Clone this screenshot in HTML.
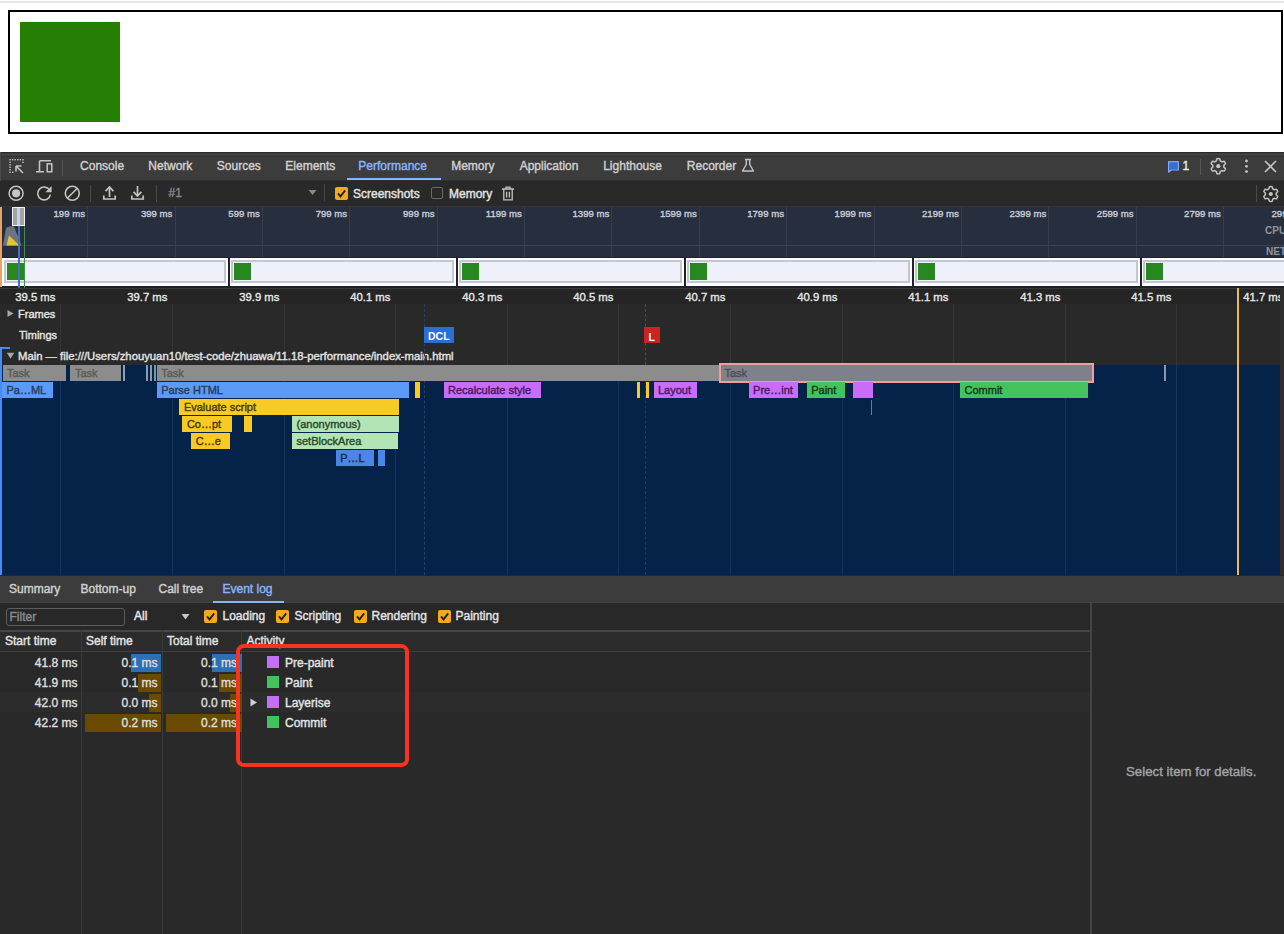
<!DOCTYPE html><html><head><meta charset="utf-8"><style>
html,body{margin:0;padding:0;width:1284px;height:934px;overflow:hidden;background:#262626}
body>div{position:absolute}
.t{position:absolute;white-space:pre;font-family:"Liberation Sans",sans-serif;-webkit-text-stroke:0.4px currentColor}
</style></head><body>
<div style="left:0px;top:0px;width:1284px;height:152px;background:#ffffff;"></div>
<div style="left:0px;top:1px;width:1284px;height:2px;background:#e6e6e6;"></div>
<div style="left:8px;top:10px;width:1275px;height:124px;background:transparent;border:2px solid #000;box-sizing:border-box"></div>
<div style="left:20px;top:22px;width:100px;height:100px;background:#237e03;"></div>
<div style="left:0px;top:152px;width:1284px;height:29px;background:#3c3c3c;"></div>
<div style="left:0px;top:152px;width:1284px;height:1px;background:#2a2a2a;"></div>
<div style="left:0px;top:154px;width:1284px;height:1px;background:#454545;"></div>
<div style="left:0px;top:156px;width:1284px;height:1px;background:#353535;"></div>
<div style="left:0px;top:180px;width:1284px;height:1px;background:#2f2f2f;"></div>
<div style="left:0px;top:152px;width:1px;height:29px;background:#4a4a4a;"></div>
<svg style="position:absolute;left:8px;top:158px;" width="17" height="17" viewBox="0 0 17 17"><g fill="#c4c4c4"><rect x="1.3" y="1" width="1.4" height="1.4"/><rect x="3.9" y="1" width="1.4" height="1.4"/><rect x="6.5" y="1" width="1.4" height="1.4"/><rect x="9.1" y="1" width="1.4" height="1.4"/><rect x="11.7" y="1" width="1.4" height="1.4"/><rect x="14.3" y="1" width="1.4" height="1.4"/><rect x="1.3" y="3.5" width="1.4" height="1.4"/><rect x="1.3" y="6.0" width="1.4" height="1.4"/><rect x="1.3" y="8.5" width="1.4" height="1.4"/><rect x="1.3" y="11.0" width="1.4" height="1.4"/><rect x="1.3" y="13.5" width="1.4" height="1.4"/><rect x="14.3" y="3.6" width="1.4" height="1.4"/><rect x="4" y="13.6" width="1.4" height="1.4"/></g><path d="M8.2 8.2 L15 15 M8 8 H13.5 M8 8 V13.5" stroke="#c4c4c4" stroke-width="1.6" fill="none"/></svg>
<svg style="position:absolute;left:35px;top:158px;" width="19" height="17" viewBox="0 0 19 17"><path d="M4.5 2.8 H16 M4.5 2.8 V13.6 M1 13.8 H9" stroke="#c4c4c4" stroke-width="1.6" fill="none"/><rect x="12.2" y="5.8" width="4.6" height="8" stroke="#c4c4c4" stroke-width="1.5" fill="none"/></svg>
<div style="left:62px;top:160px;width:1px;height:16px;background:#555;"></div>
<div class="t" style="left:80.1px;top:158px;font-size:12px;line-height:16px;color:#cfcfcf;font-weight:400;">Console</div>
<div class="t" style="left:148.3px;top:158px;font-size:12px;line-height:16px;color:#cfcfcf;font-weight:400;">Network</div>
<div class="t" style="left:216.8px;top:158px;font-size:12px;line-height:16px;color:#cfcfcf;font-weight:400;">Sources</div>
<div class="t" style="left:285.3px;top:158px;font-size:12px;line-height:16px;color:#cfcfcf;font-weight:400;">Elements</div>
<div class="t" style="left:358.3px;top:158px;font-size:12px;line-height:16px;color:#8ab4f8;font-weight:400;">Performance</div>
<div class="t" style="left:451.2px;top:158px;font-size:12px;line-height:16px;color:#cfcfcf;font-weight:400;">Memory</div>
<div class="t" style="left:519.7px;top:158px;font-size:12px;line-height:16px;color:#cfcfcf;font-weight:400;">Application</div>
<div class="t" style="left:603.2px;top:158px;font-size:12px;line-height:16px;color:#cfcfcf;font-weight:400;">Lighthouse</div>
<div class="t" style="left:686.8px;top:158px;font-size:12px;line-height:16px;color:#cfcfcf;font-weight:400;">Recorder</div>
<div style="left:347px;top:178px;width:94px;height:2px;background:#8ab4f8;"></div>
<svg style="position:absolute;left:740px;top:157px;" width="16" height="17" viewBox="0 0 16 17"><path d="M5 2.5 H11 M6.3 2.5 V7.5 L2.5 14 H13.5 L9.7 7.5 V2.5" stroke="#c4c4c4" stroke-width="1.4" fill="none" stroke-linejoin="round"/></svg>
<svg style="position:absolute;left:1167px;top:160px;" width="13" height="14" viewBox="0 0 13 14"><path d="M1.6 1.6 H11.4 V10 H4.2 L1.6 12.2 Z" fill="#3a6ad0" stroke="#7fa8f0" stroke-width="1.2" stroke-linejoin="round"/></svg>
<div class="t" style="left:1182.5px;top:158px;font-size:12px;line-height:16px;color:#e8e8e8;font-weight:400;">1</div>
<div style="left:1200px;top:159px;width:1px;height:16px;background:#555;"></div>
<svg style="position:absolute;left:1209px;top:157px;" width="19" height="19" viewBox="0 0 19 19"><path d="M9.30 1.60 L9.57 1.60 L9.83 1.62 L10.09 1.64 L10.36 1.67 L10.62 1.72 L10.81 2.08 L10.95 2.56 L11.06 3.06 L11.14 3.55 L11.22 3.92 L11.41 3.99 L11.59 4.06 L11.77 4.15 L11.94 4.23 L12.11 4.33 L12.28 4.43 L12.44 4.54 L12.61 4.65 L12.76 4.77 L12.92 4.89 L13.27 4.79 L13.74 4.61 L14.22 4.45 L14.71 4.33 L15.12 4.31 L15.29 4.52 L15.45 4.73 L15.60 4.95 L15.75 5.17 L15.88 5.40 L16.01 5.63 L16.13 5.87 L16.24 6.11 L16.35 6.35 L16.44 6.60 L16.23 6.95 L15.87 7.31 L15.50 7.66 L15.11 7.96 L14.84 8.22 L14.87 8.42 L14.89 8.61 L14.91 8.81 L14.92 9.00 L14.92 9.20 L14.92 9.40 L14.91 9.59 L14.89 9.79 L14.87 9.98 L14.84 10.18 L15.11 10.44 L15.50 10.74 L15.87 11.09 L16.23 11.45 L16.44 11.80 L16.35 12.05 L16.24 12.29 L16.13 12.53 L16.01 12.77 L15.88 13.00 L15.75 13.23 L15.60 13.45 L15.45 13.67 L15.29 13.88 L15.12 14.09 L14.71 14.07 L14.22 13.95 L13.74 13.79 L13.27 13.61 L12.92 13.51 L12.76 13.63 L12.61 13.75 L12.44 13.86 L12.28 13.97 L12.11 14.07 L11.94 14.17 L11.77 14.25 L11.59 14.34 L11.41 14.41 L11.22 14.48 L11.14 14.85 L11.06 15.34 L10.95 15.84 L10.81 16.32 L10.62 16.68 L10.36 16.73 L10.09 16.76 L9.83 16.78 L9.57 16.80 L9.30 16.80 L9.03 16.80 L8.77 16.78 L8.51 16.76 L8.24 16.73 L7.98 16.68 L7.79 16.32 L7.65 15.84 L7.54 15.34 L7.46 14.85 L7.38 14.48 L7.19 14.41 L7.01 14.34 L6.83 14.25 L6.66 14.17 L6.49 14.07 L6.32 13.97 L6.16 13.86 L5.99 13.75 L5.84 13.63 L5.68 13.51 L5.33 13.61 L4.86 13.79 L4.38 13.95 L3.89 14.07 L3.48 14.09 L3.31 13.88 L3.15 13.67 L3.00 13.45 L2.85 13.23 L2.72 13.00 L2.59 12.77 L2.47 12.53 L2.36 12.29 L2.25 12.05 L2.16 11.80 L2.37 11.45 L2.73 11.09 L3.10 10.74 L3.49 10.44 L3.76 10.18 L3.73 9.98 L3.71 9.79 L3.69 9.59 L3.68 9.40 L3.68 9.20 L3.68 9.00 L3.69 8.81 L3.71 8.61 L3.73 8.42 L3.76 8.22 L3.49 7.96 L3.10 7.66 L2.73 7.31 L2.37 6.95 L2.16 6.60 L2.25 6.35 L2.36 6.11 L2.47 5.87 L2.59 5.63 L2.72 5.40 L2.85 5.17 L3.00 4.95 L3.15 4.73 L3.31 4.52 L3.48 4.31 L3.89 4.33 L4.38 4.45 L4.86 4.61 L5.33 4.79 L5.68 4.89 L5.84 4.77 L5.99 4.65 L6.16 4.54 L6.32 4.43 L6.49 4.33 L6.66 4.23 L6.83 4.15 L7.01 4.06 L7.19 3.99 L7.38 3.92 L7.46 3.55 L7.54 3.06 L7.65 2.56 L7.79 2.08 L7.98 1.72 L8.24 1.67 L8.51 1.64 L8.77 1.62 L9.03 1.60Z" fill="none" stroke="#c4c4c4" stroke-width="1.5" stroke-linejoin="round"/><circle cx="9.3" cy="9.2" r="2.1" fill="#c4c4c4"/></svg>
<svg style="position:absolute;left:1243px;top:158px;" width="7" height="17" viewBox="0 0 7 17"><circle cx="3.5" cy="3" r="1.4" fill="#c4c4c4"/><circle cx="3.5" cy="8.3" r="1.4" fill="#c4c4c4"/><circle cx="3.5" cy="13.6" r="1.4" fill="#c4c4c4"/></svg>
<svg style="position:absolute;left:1263px;top:159px;" width="15" height="15" viewBox="0 0 15 15"><path d="M2 2 L13 13 M13 2 L2 13" stroke="#c4c4c4" stroke-width="1.6"/></svg>
<div style="left:0px;top:181px;width:1284px;height:26px;background:#292929;"></div>
<div style="left:0px;top:206px;width:1284px;height:1px;background:#343434;"></div>
<svg style="position:absolute;left:7px;top:185px;" width="19" height="17" viewBox="0 0 19 17"><circle cx="9.1" cy="8.3" r="7" stroke="#c4c4c4" stroke-width="1.5" fill="none"/><circle cx="9.1" cy="8.3" r="4.1" fill="#c4c4c4"/></svg>
<svg style="position:absolute;left:36px;top:185px;" width="17" height="17" viewBox="0 0 17 17"><path d="M13.6 5.2 A6.4 6.4 0 1 0 14.4 9.6" stroke="#c4c4c4" stroke-width="1.6" fill="none"/><path d="M15.6 1 V7.2 H9.4 Z" fill="#c4c4c4"/></svg>
<svg style="position:absolute;left:63px;top:185px;" width="18" height="17" viewBox="0 0 18 17"><circle cx="9.3" cy="8.3" r="7" stroke="#c4c4c4" stroke-width="1.6" fill="none"/><path d="M4.3 13.3 L14.3 3.3" stroke="#c4c4c4" stroke-width="1.6"/></svg>
<div style="left:90px;top:185px;width:1px;height:17px;background:#4a4a4a;"></div>
<svg style="position:absolute;left:102px;top:185px;" width="16" height="16" viewBox="0 0 16 16"><path d="M1.8 10.5 V14 H13.2 V10.5" stroke="#c4c4c4" stroke-width="1.7" fill="none"/><path d="M7.5 12 V3" stroke="#c4c4c4" stroke-width="1.7"/><path d="M3.6 6.2 L7.5 2 L11.4 6.2" stroke="#c4c4c4" stroke-width="1.7" fill="none"/></svg>
<svg style="position:absolute;left:130px;top:185px;" width="16" height="16" viewBox="0 0 16 16"><path d="M1.8 10.5 V14 H13.2 V10.5" stroke="#c4c4c4" stroke-width="1.7" fill="none"/><path d="M7.5 1 V10" stroke="#c4c4c4" stroke-width="1.7"/><path d="M3.6 6.8 L7.5 11 L11.4 6.8" stroke="#c4c4c4" stroke-width="1.7" fill="none"/></svg>
<div style="left:156px;top:185px;width:1px;height:17px;background:#4a4a4a;"></div>
<div class="t" style="left:168.5px;top:185px;font-size:12px;line-height:16px;color:#858585;font-weight:400;">#1</div>
<svg style="position:absolute;left:308px;top:189px;" width="9" height="7" viewBox="0 0 9 7"><path d="M0.5 1 H8.5 L4.5 6 Z" fill="#8a8a8a"/></svg>
<div style="left:324px;top:184px;width:1px;height:17px;background:#4a4a4a;"></div>
<svg style="position:absolute;left:335px;top:187px;" width="13" height="13" viewBox="0 0 13 13"><rect x="0" y="0" width="13" height="13" rx="2" fill="#f6a823"/><path d="M3 6.4 L5.5 9.4 L10.2 3.4" stroke="#2a2418" stroke-width="1.9" fill="none"/></svg>
<div class="t" style="left:353px;top:186px;font-size:12px;line-height:16px;color:#e3e3e3;font-weight:400;">Screenshots</div>
<div style="left:431px;top:187px;width:12px;height:12px;background:transparent;border:1px solid #6a6a6a;border-radius:2px;box-sizing:border-box"></div>
<div class="t" style="left:449px;top:186px;font-size:12px;line-height:16px;color:#e3e3e3;font-weight:400;">Memory</div>
<svg style="position:absolute;left:501px;top:186px;" width="14" height="15" viewBox="0 0 14 15"><path d="M1 3 H13 M5 3 V1.2 H9 V3 M2.8 3.5 V13.8 H11.2 V3.5 M5.6 5.8 V11.5 M8.4 5.8 V11.5" stroke="#c4c4c4" stroke-width="1.3" fill="none"/></svg>
<div style="left:1256px;top:185px;width:1px;height:17px;background:#4a4a4a;"></div>
<svg style="position:absolute;left:1262px;top:185px;" width="18" height="18" viewBox="0 0 18 18"><path d="M8.80 1.60 L9.06 1.60 L9.32 1.62 L9.57 1.64 L9.83 1.67 L10.08 1.71 L10.27 2.06 L10.41 2.54 L10.51 3.02 L10.59 3.50 L10.67 3.85 L10.85 3.92 L11.03 4.00 L11.20 4.08 L11.37 4.16 L11.54 4.26 L11.70 4.36 L11.86 4.46 L12.02 4.57 L12.17 4.68 L12.32 4.81 L12.67 4.70 L13.12 4.53 L13.59 4.37 L14.07 4.25 L14.47 4.24 L14.63 4.44 L14.79 4.65 L14.93 4.86 L15.08 5.08 L15.21 5.30 L15.33 5.53 L15.45 5.76 L15.56 5.99 L15.66 6.23 L15.75 6.47 L15.54 6.81 L15.20 7.16 L14.83 7.50 L14.46 7.80 L14.19 8.05 L14.22 8.24 L14.25 8.43 L14.26 8.62 L14.27 8.81 L14.28 9.00 L14.27 9.19 L14.26 9.38 L14.25 9.57 L14.22 9.76 L14.19 9.95 L14.46 10.20 L14.83 10.50 L15.20 10.84 L15.54 11.19 L15.75 11.53 L15.66 11.77 L15.56 12.01 L15.45 12.24 L15.33 12.47 L15.21 12.70 L15.08 12.92 L14.93 13.14 L14.79 13.35 L14.63 13.56 L14.47 13.76 L14.07 13.75 L13.59 13.63 L13.12 13.47 L12.67 13.30 L12.32 13.19 L12.17 13.32 L12.02 13.43 L11.86 13.54 L11.70 13.64 L11.54 13.74 L11.37 13.84 L11.20 13.92 L11.03 14.00 L10.85 14.08 L10.67 14.15 L10.59 14.50 L10.51 14.98 L10.41 15.46 L10.27 15.94 L10.08 16.29 L9.83 16.33 L9.57 16.36 L9.32 16.38 L9.06 16.40 L8.80 16.40 L8.54 16.40 L8.28 16.38 L8.03 16.36 L7.77 16.33 L7.52 16.29 L7.33 15.94 L7.19 15.46 L7.09 14.98 L7.01 14.50 L6.93 14.15 L6.75 14.08 L6.57 14.00 L6.40 13.92 L6.23 13.84 L6.06 13.74 L5.90 13.64 L5.74 13.54 L5.58 13.43 L5.43 13.32 L5.28 13.19 L4.93 13.30 L4.48 13.47 L4.01 13.63 L3.53 13.75 L3.13 13.76 L2.97 13.56 L2.81 13.35 L2.67 13.14 L2.52 12.92 L2.39 12.70 L2.27 12.47 L2.15 12.24 L2.04 12.01 L1.94 11.77 L1.85 11.53 L2.06 11.19 L2.40 10.84 L2.77 10.50 L3.14 10.20 L3.41 9.95 L3.38 9.76 L3.35 9.57 L3.34 9.38 L3.33 9.19 L3.32 9.00 L3.33 8.81 L3.34 8.62 L3.35 8.43 L3.38 8.24 L3.41 8.05 L3.14 7.80 L2.77 7.50 L2.40 7.16 L2.06 6.81 L1.85 6.47 L1.94 6.23 L2.04 5.99 L2.15 5.76 L2.27 5.53 L2.39 5.30 L2.52 5.08 L2.67 4.86 L2.81 4.65 L2.97 4.44 L3.13 4.24 L3.53 4.25 L4.01 4.37 L4.48 4.53 L4.93 4.70 L5.28 4.81 L5.43 4.68 L5.58 4.57 L5.74 4.46 L5.90 4.36 L6.06 4.26 L6.23 4.16 L6.40 4.08 L6.57 4.00 L6.75 3.92 L6.93 3.85 L7.01 3.50 L7.09 3.02 L7.19 2.54 L7.33 2.06 L7.52 1.71 L7.77 1.67 L8.03 1.64 L8.28 1.62 L8.54 1.60Z" fill="none" stroke="#c4c4c4" stroke-width="1.5" stroke-linejoin="round"/><circle cx="8.8" cy="9.0" r="2.1" fill="#c4c4c4"/></svg>
<div style="left:0px;top:207px;width:1284px;height:50px;background:#272e3e;"></div>
<div style="left:0px;top:245px;width:1284px;height:1px;background:#3a4150;"></div>
<div style="left:87px;top:207px;width:1px;height:50px;background:#363d4c;"></div>
<div class="t" style="right:1199.0px;top:208px;font-size:9.6px;line-height:12px;color:#c5c9d2;font-weight:400;text-align:right;">199 ms</div>
<div style="left:175px;top:207px;width:1px;height:50px;background:#363d4c;"></div>
<div class="t" style="right:1111.6px;top:208px;font-size:9.6px;line-height:12px;color:#c5c9d2;font-weight:400;text-align:right;">399 ms</div>
<div style="left:262px;top:207px;width:1px;height:50px;background:#363d4c;"></div>
<div class="t" style="right:1024.2px;top:208px;font-size:9.6px;line-height:12px;color:#c5c9d2;font-weight:400;text-align:right;">599 ms</div>
<div style="left:349px;top:207px;width:1px;height:50px;background:#363d4c;"></div>
<div class="t" style="right:936.9px;top:208px;font-size:9.6px;line-height:12px;color:#c5c9d2;font-weight:400;text-align:right;">799 ms</div>
<div style="left:437px;top:207px;width:1px;height:50px;background:#363d4c;"></div>
<div class="t" style="right:849.5px;top:208px;font-size:9.6px;line-height:12px;color:#c5c9d2;font-weight:400;text-align:right;">999 ms</div>
<div style="left:524px;top:207px;width:1px;height:50px;background:#363d4c;"></div>
<div class="t" style="right:762.1px;top:208px;font-size:9.6px;line-height:12px;color:#c5c9d2;font-weight:400;text-align:right;">1199 ms</div>
<div style="left:611px;top:207px;width:1px;height:50px;background:#363d4c;"></div>
<div class="t" style="right:674.7px;top:208px;font-size:9.6px;line-height:12px;color:#c5c9d2;font-weight:400;text-align:right;">1399 ms</div>
<div style="left:699px;top:207px;width:1px;height:50px;background:#363d4c;"></div>
<div class="t" style="right:587.3px;top:208px;font-size:9.6px;line-height:12px;color:#c5c9d2;font-weight:400;text-align:right;">1599 ms</div>
<div style="left:786px;top:207px;width:1px;height:50px;background:#363d4c;"></div>
<div class="t" style="right:500.0px;top:208px;font-size:9.6px;line-height:12px;color:#c5c9d2;font-weight:400;text-align:right;">1799 ms</div>
<div style="left:874px;top:207px;width:1px;height:50px;background:#363d4c;"></div>
<div class="t" style="right:412.6px;top:208px;font-size:9.6px;line-height:12px;color:#c5c9d2;font-weight:400;text-align:right;">1999 ms</div>
<div style="left:961px;top:207px;width:1px;height:50px;background:#363d4c;"></div>
<div class="t" style="right:325.20000000000005px;top:208px;font-size:9.6px;line-height:12px;color:#c5c9d2;font-weight:400;text-align:right;">2199 ms</div>
<div style="left:1048px;top:207px;width:1px;height:50px;background:#363d4c;"></div>
<div class="t" style="right:237.79999999999995px;top:208px;font-size:9.6px;line-height:12px;color:#c5c9d2;font-weight:400;text-align:right;">2399 ms</div>
<div style="left:1136px;top:207px;width:1px;height:50px;background:#363d4c;"></div>
<div class="t" style="right:150.4000000000001px;top:208px;font-size:9.6px;line-height:12px;color:#c5c9d2;font-weight:400;text-align:right;">2599 ms</div>
<div style="left:1223px;top:207px;width:1px;height:50px;background:#363d4c;"></div>
<div class="t" style="right:63.09999999999991px;top:208px;font-size:9.6px;line-height:12px;color:#c5c9d2;font-weight:400;text-align:right;">2799 ms</div>
<div style="left:1311px;top:207px;width:1px;height:50px;background:#363d4c;"></div>
<div class="t" style="right:-24.299999999999955px;top:208px;font-size:9.6px;line-height:12px;color:#c5c9d2;font-weight:400;text-align:right;">2999 ms</div>
<div class="t" style="left:1265px;top:225px;font-size:10px;line-height:12px;color:#8f959e;font-weight:700;-webkit-text-stroke:0">CPU</div>
<div class="t" style="left:1266px;top:246px;font-size:10px;line-height:12px;color:#8f959e;font-weight:700;-webkit-text-stroke:0">NET</div>
<svg style="position:absolute;left:2px;top:225px;" width="22" height="22" viewBox="0 0 22 22"><path d="M1 20.5 L4 3 Q5 1.5 8 1.5 H12 L19.5 20.5 Z" fill="#6f7580"/><path d="M4.5 20.5 L7 10.5 L17.5 20.5 Z" fill="#e6c52a"/></svg>
<div style="left:12px;top:207px;width:13px;height:19px;background:#a3a3a3;border:1px solid #f2f2f2;box-sizing:border-box"></div>
<div style="left:17px;top:208px;width:3px;height:17px;background:#c0d0ee;"></div>
<div style="left:0px;top:257px;width:1284px;height:31px;background:#1e2230;"></div>
<div style="left:2px;top:258px;width:225.5px;height:28px;background:#ffffff;"></div>
<div style="left:3.5px;top:260px;width:222.5px;height:23px;background:#eef0fa;border:2px solid #c4c7d2;box-sizing:border-box"></div>
<div style="left:6.5px;top:263px;width:17px;height:17px;background:#27881f;"></div>
<div style="left:229.5px;top:258px;width:226.0px;height:28px;background:#ffffff;"></div>
<div style="left:231.0px;top:260px;width:223.0px;height:23px;background:#eef0fa;border:2px solid #c4c7d2;box-sizing:border-box"></div>
<div style="left:234.0px;top:263px;width:17px;height:17px;background:#27881f;"></div>
<div style="left:457.5px;top:258px;width:226.0px;height:28px;background:#ffffff;"></div>
<div style="left:459.0px;top:260px;width:223.0px;height:23px;background:#eef0fa;border:2px solid #c4c7d2;box-sizing:border-box"></div>
<div style="left:462.0px;top:263px;width:17px;height:17px;background:#27881f;"></div>
<div style="left:685.5px;top:258px;width:226.20000000000005px;height:28px;background:#ffffff;"></div>
<div style="left:687.0px;top:260px;width:223.20000000000005px;height:23px;background:#eef0fa;border:2px solid #c4c7d2;box-sizing:border-box"></div>
<div style="left:690.0px;top:263px;width:17px;height:17px;background:#27881f;"></div>
<div style="left:913.7px;top:258px;width:226.20000000000005px;height:28px;background:#ffffff;"></div>
<div style="left:915.2px;top:260px;width:223.20000000000005px;height:23px;background:#eef0fa;border:2px solid #c4c7d2;box-sizing:border-box"></div>
<div style="left:918.2px;top:263px;width:17px;height:17px;background:#27881f;"></div>
<div style="left:1141.9px;top:258px;width:148.0999999999999px;height:28px;background:#ffffff;"></div>
<div style="left:1143.4px;top:260px;width:145.0999999999999px;height:23px;background:#eef0fa;border:2px solid #c4c7d2;box-sizing:border-box"></div>
<div style="left:1146.4px;top:263px;width:17px;height:17px;background:#27881f;"></div>
<div style="left:18px;top:226px;width:1.5px;height:62px;background:#4670b8;"></div>
<div style="left:0px;top:207px;width:1.8px;height:80px;background:#e8a462;"></div>
<div style="left:24px;top:226px;width:1px;height:62px;background:#3f8f55;"></div>
<div style="left:0px;top:288px;width:1284px;height:77px;background:#292929;"></div>
<div style="left:0px;top:288px;width:1284px;height:16px;background:#252525;"></div>
<div style="left:0px;top:288px;width:1284px;height:1px;background:#383838;"></div>
<div style="left:60px;top:304px;width:1px;height:271px;background:#353535;"></div>
<div class="t" style="right:1228.6px;top:288.7px;font-size:11.3px;line-height:16px;color:#e8e8e8;font-weight:400;text-align:right;-webkit-text-stroke:0.35px currentColor">39.5 ms</div>
<div style="left:172px;top:304px;width:1px;height:271px;background:#353535;"></div>
<div class="t" style="right:1116.6px;top:288.7px;font-size:11.3px;line-height:16px;color:#e8e8e8;font-weight:400;text-align:right;-webkit-text-stroke:0.35px currentColor">39.7 ms</div>
<div style="left:284px;top:304px;width:1px;height:271px;background:#353535;"></div>
<div class="t" style="right:1004.6px;top:288.7px;font-size:11.3px;line-height:16px;color:#e8e8e8;font-weight:400;text-align:right;-webkit-text-stroke:0.35px currentColor">39.9 ms</div>
<div style="left:395px;top:304px;width:1px;height:271px;background:#353535;"></div>
<div class="t" style="right:893.6px;top:288.7px;font-size:11.3px;line-height:16px;color:#e8e8e8;font-weight:400;text-align:right;-webkit-text-stroke:0.35px currentColor">40.1 ms</div>
<div style="left:507px;top:304px;width:1px;height:271px;background:#353535;"></div>
<div class="t" style="right:781.6px;top:288.7px;font-size:11.3px;line-height:16px;color:#e8e8e8;font-weight:400;text-align:right;-webkit-text-stroke:0.35px currentColor">40.3 ms</div>
<div style="left:618px;top:304px;width:1px;height:271px;background:#353535;"></div>
<div class="t" style="right:670.6px;top:288.7px;font-size:11.3px;line-height:16px;color:#e8e8e8;font-weight:400;text-align:right;-webkit-text-stroke:0.35px currentColor">40.5 ms</div>
<div style="left:730px;top:304px;width:1px;height:271px;background:#353535;"></div>
<div class="t" style="right:558.6px;top:288.7px;font-size:11.3px;line-height:16px;color:#e8e8e8;font-weight:400;text-align:right;-webkit-text-stroke:0.35px currentColor">40.7 ms</div>
<div style="left:842px;top:304px;width:1px;height:271px;background:#353535;"></div>
<div class="t" style="right:446.6px;top:288.7px;font-size:11.3px;line-height:16px;color:#e8e8e8;font-weight:400;text-align:right;-webkit-text-stroke:0.35px currentColor">40.9 ms</div>
<div style="left:953px;top:304px;width:1px;height:271px;background:#353535;"></div>
<div class="t" style="right:335.6px;top:288.7px;font-size:11.3px;line-height:16px;color:#e8e8e8;font-weight:400;text-align:right;-webkit-text-stroke:0.35px currentColor">41.1 ms</div>
<div style="left:1065px;top:304px;width:1px;height:271px;background:#353535;"></div>
<div class="t" style="right:223.5999999999999px;top:288.7px;font-size:11.3px;line-height:16px;color:#e8e8e8;font-weight:400;text-align:right;-webkit-text-stroke:0.35px currentColor">41.3 ms</div>
<div style="left:1176px;top:304px;width:1px;height:271px;background:#353535;"></div>
<div class="t" style="right:112.59999999999991px;top:288.7px;font-size:11.3px;line-height:16px;color:#e8e8e8;font-weight:400;text-align:right;-webkit-text-stroke:0.35px currentColor">41.5 ms</div>
<div style="left:1288px;top:304px;width:1px;height:271px;background:#353535;"></div>
<div class="t" style="right:0.599999999999909px;top:288.7px;font-size:11.3px;line-height:16px;color:#e8e8e8;font-weight:400;text-align:right;-webkit-text-stroke:0.35px currentColor">41.7 ms</div>
<svg style="position:absolute;left:6px;top:308px;" width="9" height="11" viewBox="0 0 9 11"><path d="M1.5 2 L7.5 5.5 L1.5 9 Z" fill="#a8a8a8"/></svg>
<div class="t" style="left:18px;top:306px;font-size:11px;line-height:16px;color:#e3e3e3;font-weight:400;">Frames</div>
<div class="t" style="left:19px;top:326.5px;font-size:11px;line-height:16px;color:#e3e3e3;font-weight:400;">Timings</div>
<svg style="position:absolute;left:5px;top:351px;" width="11" height="9" viewBox="0 0 11 9"><path d="M1.8 1.8 H9.2 L5.5 7.8 Z" fill="#a8a8a8"/></svg>
<div class="t" style="left:18px;top:348px;font-size:11.3px;line-height:16px;color:#e3e3e3;font-weight:400;">Main — file:///Users/zhouyuan10/test-code/zhuawa/11.18-performance/index-main.html</div>
<div style="left:0px;top:347px;width:10px;height:2px;background:#4a8af4;"></div>
<div style="left:0px;top:347px;width:2px;height:228px;background:#4a8af4;"></div>
<div style="left:424px;top:304px;width:1px;height:271px;background:transparent;border-left:1px dashed #23406e"></div>
<div style="left:645px;top:304px;width:1px;height:61px;background:transparent;border-left:1px dashed #8a3030"></div>
<div style="left:424px;top:327px;width:30px;height:16px;background:#2a6fd6;"></div>
<div class="t" style="left:428px;top:328px;font-size:10.5px;line-height:16px;color:#ffffff;font-weight:700;-webkit-text-stroke:0">DCL</div>
<div style="left:644px;top:327px;width:16px;height:16px;background:#cc2222;"></div>
<div class="t" style="left:648.5px;top:328.5px;font-size:10.5px;line-height:16px;color:#ffffff;font-weight:700;-webkit-text-stroke:0">L</div>
<div style="left:2px;top:365px;width:1278px;height:210px;background:#052249;"></div>
<div style="left:60px;top:365px;width:1px;height:210px;background:#163258;"></div>
<div style="left:172px;top:365px;width:1px;height:210px;background:#163258;"></div>
<div style="left:284px;top:365px;width:1px;height:210px;background:#163258;"></div>
<div style="left:395px;top:365px;width:1px;height:210px;background:#163258;"></div>
<div style="left:507px;top:365px;width:1px;height:210px;background:#163258;"></div>
<div style="left:618px;top:365px;width:1px;height:210px;background:#163258;"></div>
<div style="left:730px;top:365px;width:1px;height:210px;background:#163258;"></div>
<div style="left:842px;top:365px;width:1px;height:210px;background:#163258;"></div>
<div style="left:953px;top:365px;width:1px;height:210px;background:#163258;"></div>
<div style="left:1065px;top:365px;width:1px;height:210px;background:#163258;"></div>
<div style="left:1176px;top:365px;width:1px;height:210px;background:#163258;"></div>
<div style="left:424px;top:365px;width:1px;height:210px;background:transparent;border-left:1px dashed #23406e"></div>
<div style="left:645px;top:365px;width:1px;height:210px;background:transparent;border-left:1px dashed #552844"></div>
<div style="left:2.5px;top:365px;width:63.9px;height:16px;background:#8c8c8c;"></div>
<div class="t" style="left:7.0px;top:365px;font-size:11px;line-height:16px;color:#5a5a5a;font-weight:400;">Task</div>
<div style="left:70.4px;top:365px;width:51.0px;height:16px;background:#8c8c8c;"></div>
<div class="t" style="left:74.9px;top:365px;font-size:11px;line-height:16px;color:#5a5a5a;font-weight:400;">Task</div>
<div style="left:123px;top:365px;width:2px;height:16px;background:#8aa0b8;"></div>
<div style="left:146px;top:365px;width:2px;height:16px;background:#8a9ab0;"></div>
<div style="left:150px;top:365px;width:2px;height:16px;background:#8a9ab0;"></div>
<div style="left:154px;top:365px;width:2px;height:16px;background:#7a9a90;"></div>
<div style="left:156.7px;top:365px;width:562.0px;height:16px;background:#8c8c8c;"></div>
<div class="t" style="left:161.2px;top:365px;font-size:11px;line-height:16px;color:#5a5a5a;font-weight:400;">Task</div>
<div style="left:718.7px;top:363px;width:375px;height:20px;background:#7e818c;border:2px solid #f0a09a;box-sizing:border-box"></div>
<div class="t" style="left:724.5px;top:365px;font-size:11px;line-height:16px;color:#4a4e5a;font-weight:400;">Task</div>
<div style="left:1164px;top:365px;width:2px;height:16px;background:#8a98b0;"></div>
<div style="left:2px;top:382px;width:51px;height:16px;background:#5b9af6;"></div>
<div class="t" style="left:6.5px;top:382px;font-size:11px;line-height:16px;color:#2a3a5a;font-weight:400;">Pa…ML</div>
<div style="left:156.7px;top:382px;width:252.0px;height:16px;background:#5b9af6;"></div>
<div class="t" style="left:161.2px;top:382px;font-size:11px;line-height:16px;color:#2a3a5a;font-weight:400;">Parse HTML</div>
<div style="left:415px;top:382px;width:4.5px;height:16px;background:#f8ca26;"></div>
<div style="left:443.5px;top:382px;width:97.5px;height:16px;background:#c96cf8;"></div>
<div class="t" style="left:448.0px;top:382px;font-size:11px;line-height:16px;color:#4a1a62;font-weight:400;">Recalculate style</div>
<div style="left:637px;top:382px;width:3px;height:16px;background:#f8ca26;"></div>
<div style="left:645.5px;top:382px;width:3.5px;height:16px;background:#f8ca26;"></div>
<div style="left:653.5px;top:382px;width:43.5px;height:16px;background:#c96cf8;"></div>
<div class="t" style="left:658.0px;top:382px;font-size:11px;line-height:16px;color:#4a1a62;font-weight:400;">Layout</div>
<div style="left:748.6px;top:382px;width:49.4px;height:16px;background:#c96cf8;"></div>
<div class="t" style="left:753.1px;top:382px;font-size:11px;line-height:16px;color:#4a1a62;font-weight:400;">Pre…int</div>
<div style="left:806.7px;top:382px;width:38.6px;height:16px;background:#43c25e;"></div>
<div class="t" style="left:811.2px;top:382px;font-size:11px;line-height:16px;color:#123a1a;font-weight:400;">Paint</div>
<div style="left:852.5px;top:382px;width:20.7px;height:16px;background:#c96cf8;"></div>
<div style="left:960px;top:382px;width:128px;height:16px;background:#43c25e;"></div>
<div class="t" style="left:964.5px;top:382px;font-size:11px;line-height:16px;color:#123a1a;font-weight:400;">Commit</div>
<div style="left:179.4px;top:399px;width:219.9px;height:16px;background:#f8ca26;"></div>
<div class="t" style="left:183.9px;top:399px;font-size:11px;line-height:16px;color:#4a3a08;font-weight:400;">Evaluate script</div>
<div style="left:871px;top:400px;width:1px;height:15px;background:#3a9a78;"></div>
<div style="left:182.4px;top:416px;width:49.4px;height:16px;background:#f8ca26;"></div>
<div class="t" style="left:186.9px;top:416px;font-size:11px;line-height:16px;color:#4a3a08;font-weight:400;">Co…pt</div>
<div style="left:243.5px;top:416px;width:8.7px;height:16px;background:#f8ca26;"></div>
<div style="left:292px;top:416px;width:106.8px;height:16px;background:#b3e4b6;"></div>
<div class="t" style="left:296.5px;top:416px;font-size:11px;line-height:16px;color:#2a4a2a;font-weight:400;">(anonymous)</div>
<div style="left:191.2px;top:433px;width:39.1px;height:16px;background:#f8ca26;"></div>
<div class="t" style="left:195.7px;top:433px;font-size:11px;line-height:16px;color:#4a3a08;font-weight:400;">C…e</div>
<div style="left:292px;top:433px;width:106px;height:16px;background:#b3e4b6;"></div>
<div class="t" style="left:296.5px;top:433px;font-size:11px;line-height:16px;color:#2a4a2a;font-weight:400;">setBlockArea</div>
<div style="left:335.7px;top:450px;width:38.1px;height:16px;background:#4a86e8;"></div>
<div class="t" style="left:340.2px;top:450px;font-size:11px;line-height:16px;color:#1b2a44;font-weight:400;">P…L</div>
<div style="left:378px;top:450px;width:7px;height:16px;background:#4a86e8;"></div>
<div style="left:1237px;top:288px;width:2px;height:287px;background:#f2b84b;"></div>
<div style="left:1280px;top:288px;width:4px;height:287px;background:#2e2e2e;"></div>
<div style="left:0px;top:575.5px;width:1284px;height:27.5px;background:#3c3c3c;"></div>
<div style="left:0px;top:602px;width:1284px;height:1px;background:#444444;"></div>
<div class="t" style="left:9px;top:581px;font-size:12px;line-height:16px;color:#d0d0d0;font-weight:400;">Summary</div>
<div class="t" style="left:80.5px;top:581px;font-size:12px;line-height:16px;color:#d0d0d0;font-weight:400;">Bottom-up</div>
<div class="t" style="left:158.5px;top:581px;font-size:12px;line-height:16px;color:#d0d0d0;font-weight:400;">Call tree</div>
<div class="t" style="left:222.5px;top:581px;font-size:12px;line-height:16px;color:#8ab4f8;font-weight:400;">Event log</div>
<div style="left:213px;top:601px;width:71px;height:2px;background:#8ab4f8;"></div>
<div style="left:0px;top:603px;width:1284px;height:27px;background:#282828;"></div>
<div style="left:5.5px;top:608px;width:119px;height:18px;background:transparent;border:1px solid #5c5c5c;border-radius:3px;box-sizing:border-box"></div>
<div class="t" style="left:9.5px;top:609px;font-size:12px;line-height:16px;color:#8a8a8a;font-weight:400;">Filter</div>
<div class="t" style="left:134px;top:608px;font-size:12px;line-height:16px;color:#e8e8e8;font-weight:400;">All</div>
<svg style="position:absolute;left:181px;top:613px;" width="9" height="8" viewBox="0 0 9 8"><path d="M0.5 1 H8.5 L4.5 6.5 Z" fill="#c8c8c8"/></svg>
<svg style="position:absolute;left:204px;top:610px;" width="13" height="13" viewBox="0 0 13 13"><rect x="0" y="0" width="13" height="13" rx="2" fill="#f6a823"/><path d="M3 6.4 L5.5 9.4 L10.2 3.4" stroke="#2a2418" stroke-width="1.9" fill="none"/></svg>
<div class="t" style="left:222.5px;top:608px;font-size:12px;line-height:16px;color:#e3e3e3;font-weight:400;">Loading</div>
<svg style="position:absolute;left:276px;top:610px;" width="13" height="13" viewBox="0 0 13 13"><rect x="0" y="0" width="13" height="13" rx="2" fill="#f6a823"/><path d="M3 6.4 L5.5 9.4 L10.2 3.4" stroke="#2a2418" stroke-width="1.9" fill="none"/></svg>
<div class="t" style="left:294.5px;top:608px;font-size:12px;line-height:16px;color:#e3e3e3;font-weight:400;">Scripting</div>
<svg style="position:absolute;left:353.5px;top:610px;" width="13" height="13" viewBox="0 0 13 13"><rect x="0" y="0" width="13" height="13" rx="2" fill="#f6a823"/><path d="M3 6.4 L5.5 9.4 L10.2 3.4" stroke="#2a2418" stroke-width="1.9" fill="none"/></svg>
<div class="t" style="left:371.5px;top:608px;font-size:12px;line-height:16px;color:#e3e3e3;font-weight:400;">Rendering</div>
<svg style="position:absolute;left:437.5px;top:610px;" width="13" height="13" viewBox="0 0 13 13"><rect x="0" y="0" width="13" height="13" rx="2" fill="#f6a823"/><path d="M3 6.4 L5.5 9.4 L10.2 3.4" stroke="#2a2418" stroke-width="1.9" fill="none"/></svg>
<div class="t" style="left:455.5px;top:608px;font-size:12px;line-height:16px;color:#e3e3e3;font-weight:400;">Painting</div>
<div style="left:0px;top:630px;width:1090px;height:304px;background:#292929;"></div>
<div style="left:0px;top:631px;width:1090px;height:21px;background:#2c2c2c;"></div>
<div style="left:0px;top:630px;width:1090px;height:1.5px;background:#464646;"></div>
<div style="left:0px;top:651px;width:1090px;height:1px;background:#3e3e3e;"></div>
<div style="left:1090px;top:603px;width:2px;height:331px;background:#444444;"></div>
<div style="left:1092px;top:603px;width:192px;height:331px;background:#292929;"></div>
<div class="t" style="left:1126px;top:764px;font-size:13.25px;line-height:16px;color:#a0a3a8;font-weight:400;">Select item for details.</div>
<div class="t" style="left:5px;top:633px;font-size:12px;line-height:16px;color:#e3e3e3;font-weight:400;">Start time</div>
<div class="t" style="left:86px;top:633px;font-size:12px;line-height:16px;color:#e3e3e3;font-weight:400;">Self time</div>
<div class="t" style="left:167px;top:633px;font-size:12px;line-height:16px;color:#e3e3e3;font-weight:400;">Total time</div>
<div class="t" style="left:246.5px;top:633px;font-size:12px;line-height:16px;color:#e3e3e3;font-weight:400;">Activity</div>
<div style="left:0px;top:692px;width:1090px;height:20px;background:#2c2c2c;"></div>
<div style="left:81px;top:630px;width:1px;height:304px;background:#3a3a3a;"></div>
<div style="left:162px;top:630px;width:1px;height:304px;background:#3a3a3a;"></div>
<div style="left:241px;top:630px;width:1px;height:304px;background:#3a3a3a;"></div>
<div style="left:131px;top:654px;width:30px;height:18px;background:#2d6fb4;"></div>
<div style="left:212px;top:654px;width:30px;height:18px;background:#2d6fb4;"></div>
<div class="t" style="right:1206.5px;top:655px;font-size:12px;line-height:16px;color:#dcdcdc;font-weight:400;text-align:right;">41.8 ms</div>
<div class="t" style="right:1126.5px;top:655px;font-size:12px;line-height:16px;color:#dcdcdc;font-weight:400;text-align:right;">0.1 ms</div>
<div class="t" style="right:1047px;top:655px;font-size:12px;line-height:16px;color:#dcdcdc;font-weight:400;text-align:right;">0.1 ms</div>
<div style="left:267px;top:656px;width:12px;height:12px;background:#c46ff7;"></div>
<div class="t" style="left:285px;top:655px;font-size:12px;line-height:16px;color:#e3e3e3;font-weight:400;">Pre-paint</div>
<div style="left:137.5px;top:674px;width:23.5px;height:18px;background:#6a4a00;"></div>
<div style="left:218.5px;top:674px;width:23.5px;height:18px;background:#6a4a00;"></div>
<div class="t" style="right:1206.5px;top:675px;font-size:12px;line-height:16px;color:#dcdcdc;font-weight:400;text-align:right;">41.9 ms</div>
<div class="t" style="right:1126.5px;top:675px;font-size:12px;line-height:16px;color:#dcdcdc;font-weight:400;text-align:right;">0.1 ms</div>
<div class="t" style="right:1047px;top:675px;font-size:12px;line-height:16px;color:#dcdcdc;font-weight:400;text-align:right;">0.1 ms</div>
<div style="left:267px;top:676px;width:12px;height:12px;background:#43c25e;"></div>
<div class="t" style="left:285px;top:675px;font-size:12px;line-height:16px;color:#e3e3e3;font-weight:400;">Paint</div>
<div style="left:149px;top:694px;width:12px;height:18px;background:#6a4a00;"></div>
<div style="left:230px;top:694px;width:12px;height:18px;background:#6a4a00;"></div>
<div class="t" style="right:1206.5px;top:695px;font-size:12px;line-height:16px;color:#dcdcdc;font-weight:400;text-align:right;">42.0 ms</div>
<div class="t" style="right:1126.5px;top:695px;font-size:12px;line-height:16px;color:#dcdcdc;font-weight:400;text-align:right;">0.0 ms</div>
<div class="t" style="right:1047px;top:695px;font-size:12px;line-height:16px;color:#dcdcdc;font-weight:400;text-align:right;">0.0 ms</div>
<div style="left:267px;top:696px;width:12px;height:12px;background:#c46ff7;"></div>
<div class="t" style="left:285px;top:695px;font-size:12px;line-height:16px;color:#e3e3e3;font-weight:400;">Layerise</div>
<svg style="position:absolute;left:250px;top:698px;" width="8" height="9" viewBox="0 0 8 9"><path d="M0.5 0.5 L7 4.5 L0.5 8.5 Z" fill="#d0d0d0"/></svg>
<div style="left:85px;top:714px;width:76px;height:18px;background:#6a4a00;"></div>
<div style="left:166px;top:714px;width:76px;height:18px;background:#6a4a00;"></div>
<div class="t" style="right:1206.5px;top:715px;font-size:12px;line-height:16px;color:#dcdcdc;font-weight:400;text-align:right;">42.2 ms</div>
<div class="t" style="right:1126.5px;top:715px;font-size:12px;line-height:16px;color:#dcdcdc;font-weight:400;text-align:right;">0.2 ms</div>
<div class="t" style="right:1047px;top:715px;font-size:12px;line-height:16px;color:#dcdcdc;font-weight:400;text-align:right;">0.2 ms</div>
<div style="left:267px;top:716px;width:12px;height:12px;background:#43c25e;"></div>
<div class="t" style="left:285px;top:715px;font-size:12px;line-height:16px;color:#e3e3e3;font-weight:400;">Commit</div>
<div style="left:235.5px;top:643.5px;width:173.5px;height:123.5px;background:transparent;border:4px solid #fa3320;border-radius:8px;box-sizing:border-box"></div>
</body></html>
